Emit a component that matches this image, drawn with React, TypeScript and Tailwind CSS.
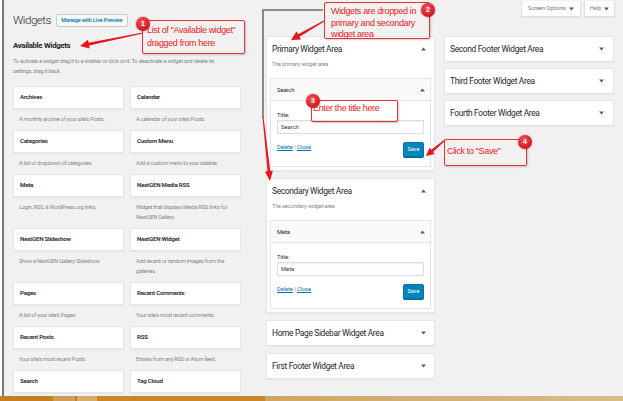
import React from "react";

const widgets: [string, string[]][] = [
  ["Archives", ["A monthly archive of your site's Posts."]],
  ["Calendar", ["A calendar of your site's Posts."]],
  ["Categories", ["A list or dropdown of categories."]],
  ["Custom Menu", ["Add a custom menu to your sidebar."]],
  ["Meta", ["Login, RSS, & WordPress.org links."]],
  ["NextGEN Media RSS", ["Widget that displays Media RSS links for", "NextGEN Gallery."]],
  ["NextGEN Slideshow", ["Show a NextGEN Gallery Slideshow"]],
  ["NextGEN Widget", ["Add recent or random images from the", "galleries"]],
  ["Pages", ["A list of your site's Pages."]],
  ["Recent Comments", ["Your site's most recent comments."]],
  ["Recent Posts", ["Your site's most recent Posts."]],
  ["RSS", ["Entries from any RSS or Atom feed."]],
  ["Search", []],
  ["Tag Cloud", []],
];

const Tri = ({ up }: { up?: boolean }) => (
  <svg width="5" height="4" viewBox="0 0 5 4" className="shrink-0">
    <polygon points={up ? "2.5,0.5 5,3.5 0,3.5" : "0,0.5 5,0.5 2.5,3.5"} fill="#555d66" />
  </svg>
);

function arrow(x1: number, y1: number, x2: number, y2: number, hl = 9, hw = 4.5, sw = 1.4) {
  const dx = x2 - x1;
  const dy = y2 - y1;
  const L = Math.hypot(dx, dy);
  const ux = dx / L;
  const uy = dy / L;
  const px = -uy;
  const py = ux;
  const bx = x2 - ux * hl;
  const by = y2 - uy * hl;
  const pts = [
    [x1 + px * 0.5, y1 + py * 0.5],
    [bx + px * sw, by + py * sw],
    [bx + px * hw, by + py * hw],
    [x2, y2],
    [bx - px * hw, by - py * hw],
    [bx - px * sw, by - py * sw],
    [x1 - px * 0.5, y1 - py * 0.5],
  ];
  return pts.map((p) => p.join(",")).join(" ");
}

function OpenWidget({ name, value }: { name: string; value: string }) {
  return (
    <div className="mt-[10px] border border-[#e5e5e5] bg-white">
      <div className="h-[22px] flex items-center justify-between pl-[6px] pr-[5px] border-b border-[#e5e5e5] bg-[#fafafa]">
        <span className="text-[6px] tracking-[-0.03em] text-[#23282d]">{name}</span>
        <Tri up />
      </div>
      <div className="px-[6px] pt-[11px] pb-[9px]">
        <div className="text-[5.6px] leading-[7px] text-[#23282d]">Title:</div>
        <div className="mt-[1px] h-[14px] border border-[#dddddd] shadow-[inset_0_1px_2px_rgba(0,0,0,0.07)] flex items-center px-[3px] text-[5.8px] text-[#32373c]">
          {value}
        </div>
        <div className="mt-[8px] flex items-start justify-between">
          <div className="leading-[10px] text-[5.6px] text-[#0073aa]">
            <span className="underline">Delete</span> <span className="text-[#72777c]">|</span>{" "}
            <span className="underline">Close</span>
          </div>
          <div className="h-[15px] w-[21px] bg-[#0085ba] border border-[#0073aa] rounded-[2px] shadow-[0_1px_0_#006799] text-white text-[5.6px] flex items-center justify-center">
            Save
          </div>
        </div>
      </div>
    </div>
  );
}

function OpenArea({ title, desc, widget, value }: { title: string; desc: string; widget: string; value: string }) {
  return (
    <div className="bg-white border border-[#e5e5e5] shadow-[0_1px_1px_rgba(0,0,0,0.04)] px-[3px] pt-[7px] pb-[3px]">
      <div className="flex items-center justify-between pl-[2px] pr-[5px] h-[10px]">
        <span className="text-[8.4px] leading-[10px] tracking-[-0.04em] text-[#23282d]">{title}</span>
        <Tri up />
      </div>
      <div className="mt-[6px] pl-[2px] text-[5.6px] leading-[8px] tracking-[-0.03em] text-[#82878c]">{desc}</div>
      <OpenWidget name={widget} value={value} />
    </div>
  );
}

function ClosedArea({ title, pr }: { title: string; pr: string }) {
  return (
    <div className={`h-[26px] bg-white border border-[#e5e5e5] shadow-[0_1px_1px_rgba(0,0,0,0.04)] flex items-center justify-between pl-[5px] ${pr}`}>
      <span className="text-[8.4px] tracking-[-0.04em] text-[#23282d]">{title}</span>
      <Tri />
    </div>
  );
}

const annot = "font-['Liberation_Sans',Arial,sans-serif] text-[9px] tracking-[-0.04em] text-[#ea1c24]";
const badge =
  "absolute w-[14px] h-[14px] rounded-full bg-[radial-gradient(circle_at_40%_35%,#f0555a_0%,#d8222b_55%,#b0131c_100%)] shadow-[0_0_2px_rgba(150,0,0,0.6)] flex items-center justify-center text-white text-[7px] font-bold font-['Liberation_Sans',Arial,sans-serif]";
const box = "absolute border border-[#e8323a] rounded-[2px] shadow-[1px_1px_2px_rgba(0,0,0,0.2)]";

export default function App() {
  return (
    <div className="relative w-[623px] h-[401px] overflow-hidden bg-white flex flex-col font-['Roboto',sans-serif]">
      <div className="flex-1 min-h-0 ml-[2px] border-l-2 border-[#777777] bg-[#f1f1f1] flex overflow-hidden pl-[9px]">
        {/* available widgets */}
        <div className="w-[228px] pt-[14px] shrink-0">
          <div className="flex items-center gap-[5px] h-[13px]">
            <h1 className="text-[11.5px] font-light leading-[13px] tracking-[-0.04em] text-[#23282d]">Widgets</h1>
            <span className="h-[13px] w-[72px] border border-[#cccccc] bg-[#f7f7f7] rounded-[2px] text-[5.5px] font-medium text-[#0073aa] flex items-center justify-center tracking-[-0.02em]">
              Manage with Live Preview
            </span>
          </div>
          <h2 className="mt-[14px] text-[7.8px] leading-[10px] font-bold tracking-[-0.04em] text-[#23282d]">
            Available Widgets
          </h2>
          <p className="mt-[6px] text-[5.6px] leading-[9.5px] tracking-[-0.04em] text-[#82878c] whitespace-nowrap">
            To activate a widget drag it to a sidebar or click on it. To deactivate a widget and delete its
            <br />
            settings, drag it back.
          </p>
          <div className="mt-[10px] grid grid-cols-2 gap-x-[6px]">
            {widgets.map(([t, d]) => (
              <div key={t} className="flex flex-col">
                <div className="h-[23px] bg-white border border-[#e5e5e5] shadow-[0_1px_1px_rgba(0,0,0,0.04)] flex items-center pl-[6px] text-[6.2px] font-semibold tracking-[-0.04em] text-[#23282d]">
                  {t}
                </div>
                <div className="pt-[5px] pb-[6px] pl-[6px] text-[5.6px] leading-[10px] tracking-[-0.04em] text-[#82878c] whitespace-nowrap">
                  {d.map((l) => (
                    <div key={l}>{l}</div>
                  ))}
                </div>
              </div>
            ))}
          </div>
        </div>

        {/* primary / secondary column */}
        <div className="ml-[25px] w-[169px] shrink-0 pt-[36px] flex flex-col gap-[7px]">
          <OpenArea title="Primary Widget Area" desc="The primary widget area" widget="Search" value="Search" />
          <OpenArea title="Secondary Widget Area" desc="The secondary widget area" widget="Meta" value="Meta" />
          <ClosedArea title="Home Page Sidebar Widget Area" pr="pr-[8px]" />
          <ClosedArea title="First Footer Widget Area" pr="pr-[8px]" />
        </div>

        {/* footer column */}
        <div className="ml-[9px] w-[170px] shrink-0 flex flex-col">
          <div className="h-[17px] flex justify-end gap-[3px] pt-[1px] -mr-[1px]">
            <div className="w-[60px] bg-white border-x border-b border-[#e1e1e1] shadow-[0_1px_1px_rgba(0,0,0,0.04)] flex items-center justify-center gap-[3px] text-[5.6px] text-[#72777c]">
              Screen Options <Tri />
            </div>
            <div className="w-[31px] bg-white border-x border-b border-[#e1e1e1] shadow-[0_1px_1px_rgba(0,0,0,0.04)] flex items-center justify-center gap-[3px] text-[5.6px] text-[#72777c]">
              Help <Tri />
            </div>
          </div>
          <div className="mt-[19px] flex flex-col gap-[6px]">
            <ClosedArea title="Second Footer Widget Area" pr="pr-[9px]" />
            <ClosedArea title="Third Footer Widget Area" pr="pr-[9px]" />
            <ClosedArea title="Fourth Footer Widget Area" pr="pr-[9px]" />
          </div>
        </div>
      </div>

      {/* bottom strip */}
      <div className="h-[5px] flex shrink-0">
        <div className="w-[53px] bg-[#c47f22]" />
        <div className="w-[22px] bg-[#cf9d5a]" />
        <div className="w-[2px] bg-[#c47f22]" />
        <div className="w-[20px] bg-[#d4ac70]" />
        <div className="w-[168px] bg-[#c8872b]" />
        <div className="flex-1 bg-[linear-gradient(90deg,#cfa566,#d9bb8c)]" />
      </div>

      {/* annotations */}
      <div className="absolute inset-0 pointer-events-none">
        <svg width="623" height="401" className="absolute left-0 top-0">
          <polyline points="323,10 263,10 263,118" fill="none" stroke="#6e6e6e" strokeWidth="1.6" />
          <polygon points={arrow(143, 33, 80, 46)} fill="#e8141e" />
          <polygon points={arrow(324, 21, 291, 40)} fill="#e8141e" />
          <polygon points={arrow(263, 117, 270, 181, 10, 4)} fill="#e8141e" />
          <polygon points={arrow(445, 140, 426, 156, 8, 4)} fill="#e8141e" />
        </svg>

        <div className={`${box} left-[142px] top-[20px] w-[103px] h-[34px] pl-[4px] pt-[3px]`}>
          <div className={`${annot} leading-[12.5px]`}>
            List of "Available widget"
            <br />
            dragged from here
          </div>
        </div>
        <div className={`${badge} left-[136px] top-[17px]`}>1</div>

        <div className={`${box} left-[324px] top-[2px] w-[106px] h-[37px] pl-[6px] pt-[3px]`}>
          <div className={`${annot} leading-[11.5px]`}>
            Widgets are dropped in
            <br />
            primary and secondary
            <br />
            widget area
          </div>
        </div>
        <div className={`${badge} left-[421px] top-[3px]`}>2</div>

        <div className={`${box} left-[311px] top-[100px] w-[87px] h-[22px]`} />
        <div className={`${badge} left-[306px] top-[94px]`}>3</div>
        <div className={`absolute left-[313px] top-[103px] ${annot} leading-[11px]`}>Enter the title here</div>

        <div className={`${box} left-[444px] top-[139px] w-[83px] h-[27px] pl-[2px] pt-[6px]`}>
          <div className={`${annot} leading-[11px]`}>Click to "Save"</div>
        </div>
        <div className={`${badge} left-[518px] top-[135px]`}>4</div>
      </div>
    </div>
  );
}
